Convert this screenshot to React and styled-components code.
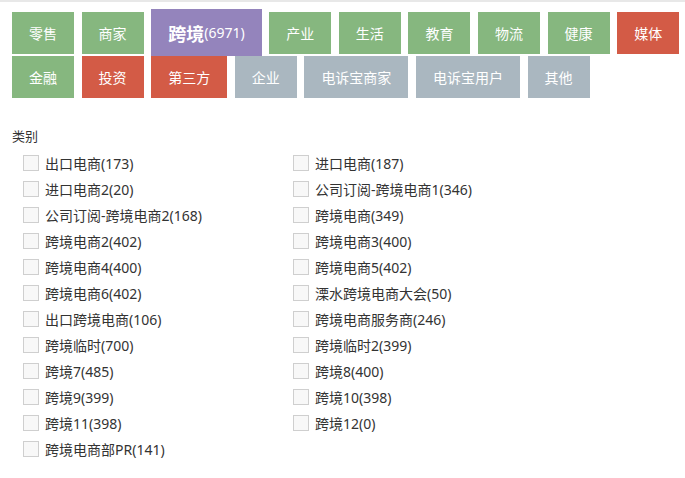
import styled, { createGlobalStyle } from 'styled-components';

const GlobalStyle = createGlobalStyle`
  body {
    margin: 0;
    font-family: "Noto Sans", "Noto Sans CJK SC", sans-serif;
    color: #333;
    background: #fff;
  }
`;

const colors = {
  green: '#86b77f',
  purple: '#9484bc',
  red: '#d35b46',
  gray: '#aab7c0',
};

const Page = styled.div`
  border-top: 2px solid #e8e8e8;
  width: 685px;
  min-height: 476px;
  box-sizing: border-box;
`;

const TabBar = styled.div`
  display: flex;
  flex-wrap: wrap;
  align-items: flex-start;
  column-gap: 7.6px;
  row-gap: 2px;
  padding: 10px 0 0 12px;
`;

const Tab = styled.div`
  height: ${(p) => (p.$active ? '47px' : '42px')};
  margin: ${(p) => (p.$active ? '-3px 0 -2px' : '0')};
  padding: 0 17px;
  display: flex;
  align-items: center;
  justify-content: center;
  background: ${(p) => colors[p.$color]};
  color: #fff;
  font-size: 14px;
  white-space: nowrap;
  cursor: pointer;
  box-sizing: border-box;
`;

const TabName = styled.span`
  font-size: 18px;
  font-weight: bold;
`;

const Section = styled.div`
  padding: 28px 0 0 12px;
`;

const Label = styled.div`
  font-size: 13px;
  line-height: 20px;
  margin-bottom: 4px;
`;

const List = styled.div`
  display: grid;
  grid-template-columns: 270px 270px;
  padding-left: 11px;
`;

const Item = styled.label`
  display: flex;
  align-items: center;
  height: 26px;
  font-size: 14px;
  color: #333;
  cursor: pointer;
`;

const Box = styled.span`
  width: 16px;
  height: 16px;
  box-sizing: border-box;
  border: 1px solid #cfcfcf;
  background: #f8f8f8;
  margin-right: 6px;
  flex-shrink: 0;
`;

const tabs = [
  { name: '零售', color: 'green' },
  { name: '商家', color: 'green' },
  { name: '跨境', color: 'purple', active: true, count: 6971 },
  { name: '产业', color: 'green' },
  { name: '生活', color: 'green' },
  { name: '教育', color: 'green' },
  { name: '物流', color: 'green' },
  { name: '健康', color: 'green' },
  { name: '媒体', color: 'red' },
  { name: '金融', color: 'green' },
  { name: '投资', color: 'red' },
  { name: '第三方', color: 'red' },
  { name: '企业', color: 'gray' },
  { name: '电诉宝商家', color: 'gray' },
  { name: '电诉宝用户', color: 'gray' },
  { name: '其他', color: 'gray' },
];

const categories = [
  '出口电商(173)',
  '进口电商(187)',
  '进口电商2(20)',
  '公司订阅-跨境电商1(346)',
  '公司订阅-跨境电商2(168)',
  '跨境电商(349)',
  '跨境电商2(402)',
  '跨境电商3(400)',
  '跨境电商4(400)',
  '跨境电商5(402)',
  '跨境电商6(402)',
  '溧水跨境电商大会(50)',
  '出口跨境电商(106)',
  '跨境电商服务商(246)',
  '跨境临时(700)',
  '跨境临时2(399)',
  '跨境7(485)',
  '跨境8(400)',
  '跨境9(399)',
  '跨境10(398)',
  '跨境11(398)',
  '跨境12(0)',
  '跨境电商部PR(141)',
];

export default function App() {
  return (
    <Page>
      <GlobalStyle />
      <TabBar>
        {tabs.map((t) => (
          <Tab key={t.name} $color={t.color} $active={t.active}>
            {t.active ? (
              <>
                <TabName>{t.name}</TabName>({t.count})
              </>
            ) : (
              t.name
            )}
          </Tab>
        ))}
      </TabBar>
      <Section>
        <Label>类别</Label>
        <List>
          {categories.map((c) => (
            <Item key={c}>
              <Box />
              {c}
            </Item>
          ))}
        </List>
      </Section>
    </Page>
  );
}
